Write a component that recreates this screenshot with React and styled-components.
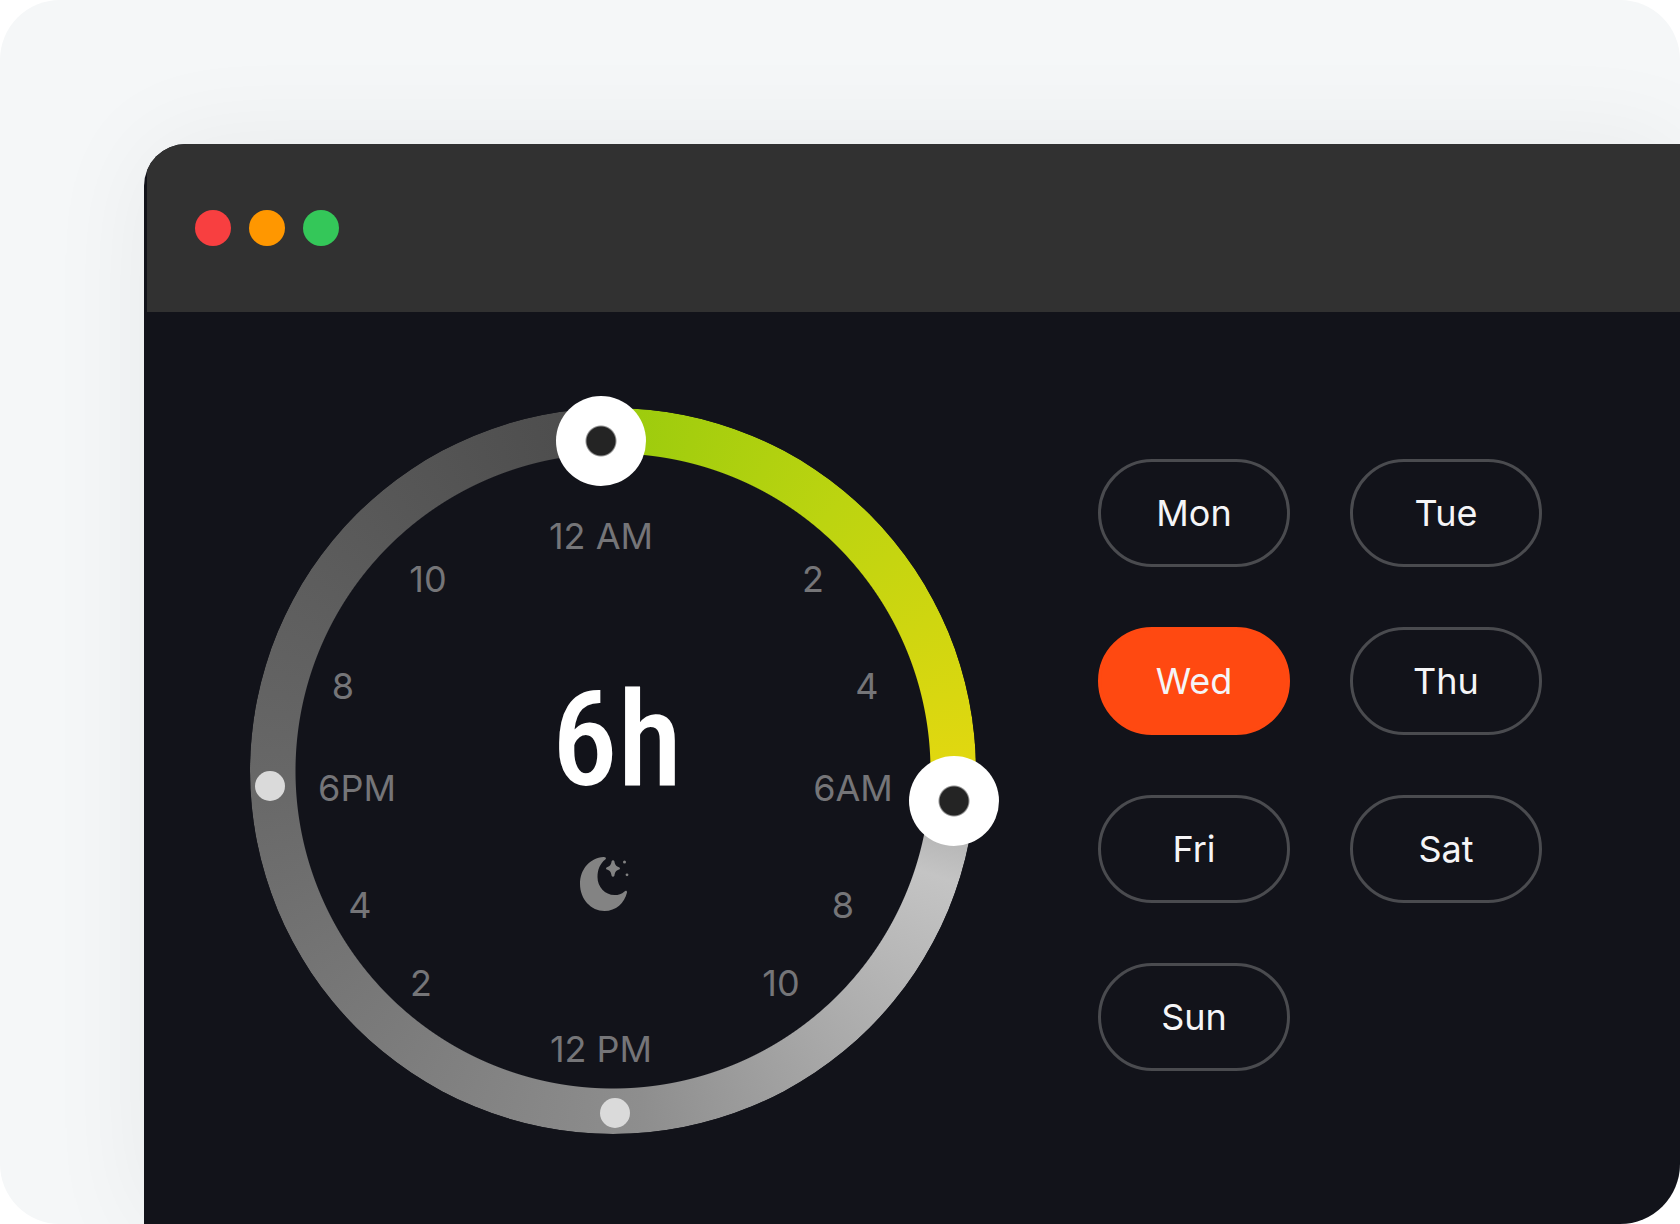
import React, { useState } from "react";
import styled, { createGlobalStyle, css } from "styled-components";

const GlobalStyle = createGlobalStyle`
    * {
        box-sizing: border-box;
    }
    body {
        margin: 0;
        background-color: #ffffff;
        font-family: Inter, "Liberation Sans", sans-serif;
    }
    h1, ul, p {
        margin: 0;
        padding: 0;
        list-style: none;
    }
`;

const Stage = styled.main`
    display: flex;
    min-height: 100vh;
    padding: 144px 0 0 144px;
    border-radius: 60px;
    overflow: hidden;
    background-color: #f5f7f8;
`;

const Window = styled.section`
    flex: 1;
    display: flex;
    flex-direction: column;
    padding-left: 3px;
    border-radius: 42px 0 0 0;
    overflow: hidden;
    background-color: #12131a;
    box-shadow: 0 0 108px rgba(0, 0, 0, 0.06);
`;

const TitleBar = styled.header`
    display: flex;
    align-items: center;
    gap: 18px;
    height: 168px;
    padding: 0 48px;
    background-color: #313131;
`;

const WindowButton = styled.button`
    width: 36px;
    height: 36px;
    padding: 0;
    border: none;
    border-radius: 50%;
    background-color: ${({ $color }) => $color};
`;

const Content = styled.div`
    display: flex;
    align-items: flex-start;
    gap: 122px;
    padding: 96px 60px 84px 103px;
`;

const Dial = styled.div`
    position: relative;
    flex: none;
    display: flex;
    justify-content: center;
    width: 726px;
    height: 726px;
    &::before {
        content: "";
        position: absolute;
        inset: 0;
        border-radius: 50%;
        background: conic-gradient(
            #9acb0d 0deg,
            #bcd410 40deg,
            #e2d810 90deg,
            #e2d810 95deg,
            #adadad 95deg,
            #b8b8b8 102deg,
            #c4c4c4 108deg,
            #b2b2b2 130deg,
            #8e8e8e 175deg,
            #7b7b7b 220deg,
            #676767 270deg,
            #4c4c4c 357deg,
            #9acb0d 357deg
        );
        mask: radial-gradient(circle closest-side, transparent 317px, #000000 318px);
    }
`;

const Readout = styled.div`
    display: flex;
    flex-direction: column;
    align-items: flex-start;
    gap: 48px;
    padding: 263px 0 0 8px;
`;

const Duration = styled.h1`
    font-family: "Roboto Condensed", "Liberation Sans Narrow", "Liberation Sans", sans-serif;
    font-size: 132px;
    font-weight: 500;
    line-height: 138px;
    color: #ffffff;
`;

const MoonIcon = styled.svg`
    width: 49px;
    height: 54px;
    margin-left: 28px;
    fill: #838383;
`;

const placed = css`
    position: absolute;
    left: ${({ $x }) => $x}px;
    top: ${({ $y }) => $y}px;
    transform: translate(-50%, -50%);
`;

const HourLabel = styled.li`
    ${placed}
    font-size: 36px;
    line-height: 44px;
    white-space: nowrap;
    color: #757578;
`;

const Marker = styled.span`
    ${placed}
    width: 30px;
    height: 30px;
    border-radius: 50%;
    background-color: #dadada;
`;

const thumb = css`
    appearance: none;
    width: 90px;
    height: 90px;
    border: none;
    border-radius: 50%;
    background: radial-gradient(circle, #242424 14px, #ffffff 16px);
`;

const Handle = styled.input`
    ${placed}
    appearance: none;
    width: 90px;
    height: 90px;
    margin: 0;
    border-radius: 50%;
    background: transparent;
    &::-webkit-slider-thumb {
        ${thumb}
    }
    &::-moz-range-thumb {
        ${thumb}
    }
`;

const Days = styled.ul`
    display: grid;
    grid-template-columns: repeat(2, 192px);
    gap: 60px;
    padding-top: 51px;
`;

const DayButton = styled.button`
    width: 100%;
    height: 108px;
    padding: 0;
    border: 3px solid ${({ $active }) => ($active ? "#ff4911" : "#4a4b4f")};
    border-radius: 54px;
    background-color: ${({ $active }) => ($active ? "#ff4911" : "transparent")};
    font-family: inherit;
    font-size: 36px;
    line-height: 44px;
    color: #f5f5f7;
`;

const windowButtons = [
    { name: "Close", color: "#f83f40" },
    { name: "Minimize", color: "#ff9700" },
    { name: "Zoom", color: "#34c759" },
];

const hours = [
    { text: "12 AM", x: 351, y: 128 },
    { text: "2", x: 563, y: 171 },
    { text: "4", x: 617, y: 278 },
    { text: "6AM", x: 603, y: 380 },
    { text: "8", x: 593, y: 497 },
    { text: "10", x: 531, y: 575 },
    { text: "12 PM", x: 351, y: 641 },
    { text: "2", x: 171, y: 575 },
    { text: "4", x: 110, y: 497 },
    { text: "6PM", x: 107, y: 380 },
    { text: "8", x: 93, y: 278 },
    { text: "10", x: 178, y: 171 },
];

const days = ["Mon", "Tue", "Wed", "Thu", "Fri", "Sat", "Sun"];

const SleepDial = () => (
    <Dial>
        <Readout>
            <Duration>6h</Duration>
            <MoonIcon viewBox="0 0 49 54" aria-hidden="true">
                <path d="M23.5 0C10 1 0 12 0 27C0 42 11 54 24.5 54C36 54 44.5 46 47 35.5C47.3 34 45.8 33.3 44.5 34.4C41.5 37 38.5 38 34.5 38C25 38 17.5 30 17.5 20C17.5 13 20 6.5 25.3 2.6C26.6 1.4 26 0 23.5 0Z" />
                <path d="M31.6 4.2C32 3 34 3 34.4 4.2C35 7.5 35.7 9.2 39 10.2C40.3 10.6 40.3 12.2 39 12.6C35.7 13.6 35 15.5 34.4 18.8C34 20 32 20 31.6 18.8C31 15.5 30.3 13.6 27 12.6C25.7 12.2 25.7 10.6 27 10.2C30.3 9.2 31 7.5 31.6 4.2Z" />
                <circle cx="44.5" cy="4.9" r="1.5" />
                <circle cx="47" cy="17.8" r="1.4" />
            </MoonIcon>
        </Readout>
        <ul>
            {hours.map(({ text, x, y }) => (
                <HourLabel key={`${x}-${y}`} $x={x} $y={y}>{text}</HourLabel>
            ))}
        </ul>
        <Marker $x={20} $y={378} />
        <Marker $x={365} $y={705} />
        <Handle type="range" min="0" max="24" defaultValue="0" aria-label="Bedtime" $x={351} $y={33} />
        <Handle type="range" min="0" max="24" defaultValue="6" aria-label="Wake up" $x={704} $y={393} />
    </Dial>
);

const DayPicker = () => {
    const [active, setActive] = useState("Wed");

    return (
        <Days>
            {days.map((day) => (
                <li key={day}>
                    <DayButton
                        type="button"
                        aria-pressed={day === active}
                        $active={day === active}
                        onClick={() => setActive(day)}
                    >
                        {day}
                    </DayButton>
                </li>
            ))}
        </Days>
    );
};

const App = () => (
    <>
        <GlobalStyle />
        <Stage>
            <Window>
                <TitleBar>
                    {windowButtons.map(({ name, color }) => (
                        <WindowButton key={name} type="button" aria-label={name} $color={color} />
                    ))}
                </TitleBar>
                <Content>
                    <SleepDial />
                    <DayPicker />
                </Content>
            </Window>
        </Stage>
    </>
);

export default App;
